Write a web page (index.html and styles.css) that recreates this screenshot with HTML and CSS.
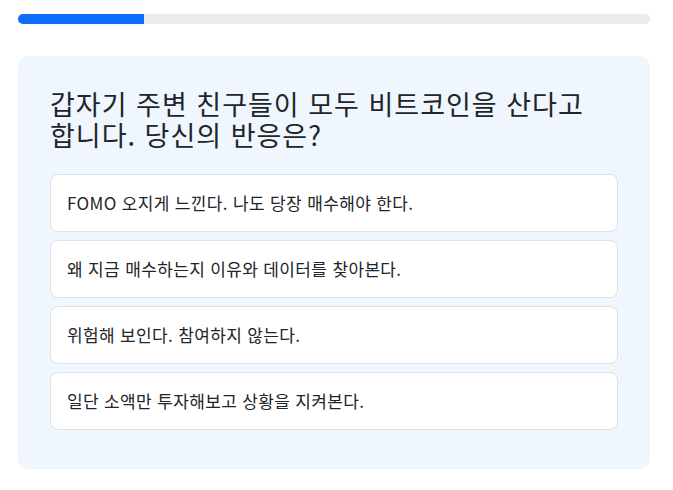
FILE: index.html
```html
<!DOCTYPE html>
<html lang="ko">
<head>
<meta charset="utf-8">
<link rel="stylesheet" href="styles.css">
</head>
<body>
<div class="page">
  <div class="progress"><div class="progress-fill" style="width:20%"></div></div>
  <div class="card">
    <h2 class="question">갑자기 주변 친구들이 모두 비트코인을 산다고 합니다. 당신의 반응은?</h2>
    <div class="options">
      <button class="option">FOMO 오지게 느낀다. 나도 당장 매수해야 한다.</button>
      <button class="option">왜 지금 매수하는지 이유와 데이터를 찾아본다.</button>
      <button class="option">위험해 보인다. 참여하지 않는다.</button>
      <button class="option">일단 소액만 투자해보고 상황을 지켜본다.</button>
    </div>
  </div>
</div>
</body>
</html>
```

FILE: styles.css
```css
html, body {
  margin: 0;
  padding: 0;
  background: #ffffff;
}
body {
  font-family: "Noto Sans CJK KR", "Noto Sans", sans-serif;
  color: #212529;
}
.page {
  padding: 14px 23px 0 18px;
}
.progress {
  height: 10px;
  background: #e9ecef;
  border-radius: 5px;
  overflow: hidden;
}
.progress-fill {
  height: 100%;
  background: #0d6efd;
}
.card {
  margin-top: 32px;
  background: #f0f6fe;
  border-radius: 10px;
  padding: 32px 32px 31px;
}
.question {
  margin: 0 0 24px;
  font-size: 27px;
  font-weight: 400;
  line-height: 31px;
  letter-spacing: 1px;
  word-break: keep-all;
  color: #212529;
}
.options {
  display: flex;
  flex-direction: column;
  gap: 8px;
}
.option {
  display: block;
  width: 100%;
  text-align: left;
  background: #ffffff;
  border: 1px solid #dee2e6;
  border-radius: 8px;
  padding: 16px 16px;
  font-family: inherit;
  font-size: 17px;
  line-height: 24px;
  letter-spacing: 0.35px;
  word-break: keep-all;
  color: #212529;
  margin: 0;
}
.options .option:last-child {
  margin-bottom: 8px;
}
```
